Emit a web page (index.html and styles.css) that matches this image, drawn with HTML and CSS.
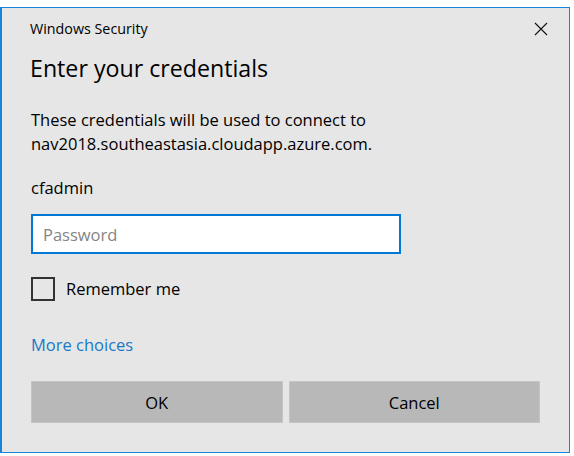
FILE: index.html
```html
<!DOCTYPE html>
<html lang="en">
<head>
    <meta charset="UTF-8">
    <title>Windows Security</title>
    <link rel="stylesheet" href="styles.css">
</head>
<body>
    <div class="dialog">
        <div class="titlebar">
            <span class="title">Windows Security</span>
            <button class="close" aria-label="Close">
                <svg width="14" height="14" viewBox="0 0 14 14"><path d="M1 1 L13 13 M13 1 L1 13" stroke="#111" stroke-width="1.1" fill="none"/></svg>
            </button>
        </div>
        <div class="content">
            <h1>Enter your credentials</h1>
            <p>These credentials will be used to connect to<br>nav2018.southeastasia.cloudapp.azure.com.</p>
            <div class="user">cfadmin</div>
            <input type="password" class="password" placeholder="Password">
            <label class="remember"><span class="box"></span>Remember me</label>
            <a class="more" href="#">More choices</a>
            <div class="actions">
                <button class="btn">OK</button>
                <button class="btn">Cancel</button>
            </div>
        </div>
    </div>
</body>
</html>
```

FILE: styles.css
```css
body { margin: 0; background-color: #fff; font-family: "Open Sans", Arial, sans-serif; color: #000; }
.dialog { margin-top: 7px; width: 570px; height: 446px; box-sizing: border-box; background-color: #e6e6e6; border: 1px solid #1883d7; border-left-width: 2px; }
.titlebar { display: flex; align-items: center; justify-content: space-between; height: 41px; padding-left: 28px; }
.title { font-size: 14.3px; line-height: 20px; }
.close { width: 56px; height: 41px; border: none; background: none; padding: 0; display: flex; align-items: center; justify-content: center; }
.content { padding: 0 29px 0 29px; }
h1 { margin: 3px 0 0 -1px; font-size: 23.2px; line-height: 32px; font-weight: normal; }
p { margin: 24px 0 0 0; font-size: 16.5px; line-height: 24px; }
.user { margin-top: 20px; font-size: 16.5px; line-height: 24px; }
.password { display: block; margin-top: 14px; width: 370px; height: 40px; box-sizing: border-box; border: 2px solid #0078d7; background: #fff; padding: 0 10px; font-family: inherit; font-size: 16.5px; outline: none; }
.password::placeholder { color: #858585; }
.remember { display: flex; align-items: center; margin-top: 23px; font-size: 16.5px; line-height: 24px; }
.box { width: 24px; height: 24px; box-sizing: border-box; border: 2px solid #333; margin-right: 11px; }
.more { display: block; margin-top: 32px; font-size: 16.5px; line-height: 24px; color: #1a78c9; text-decoration: none; }
.actions { display: flex; gap: 6px; margin-top: 24px; }
.btn { flex: 1; height: 42px; background-color: #b8b8b8; border: 1px solid #c4c4c4; font-family: inherit; font-size: 16.5px; color: #000; }
```
